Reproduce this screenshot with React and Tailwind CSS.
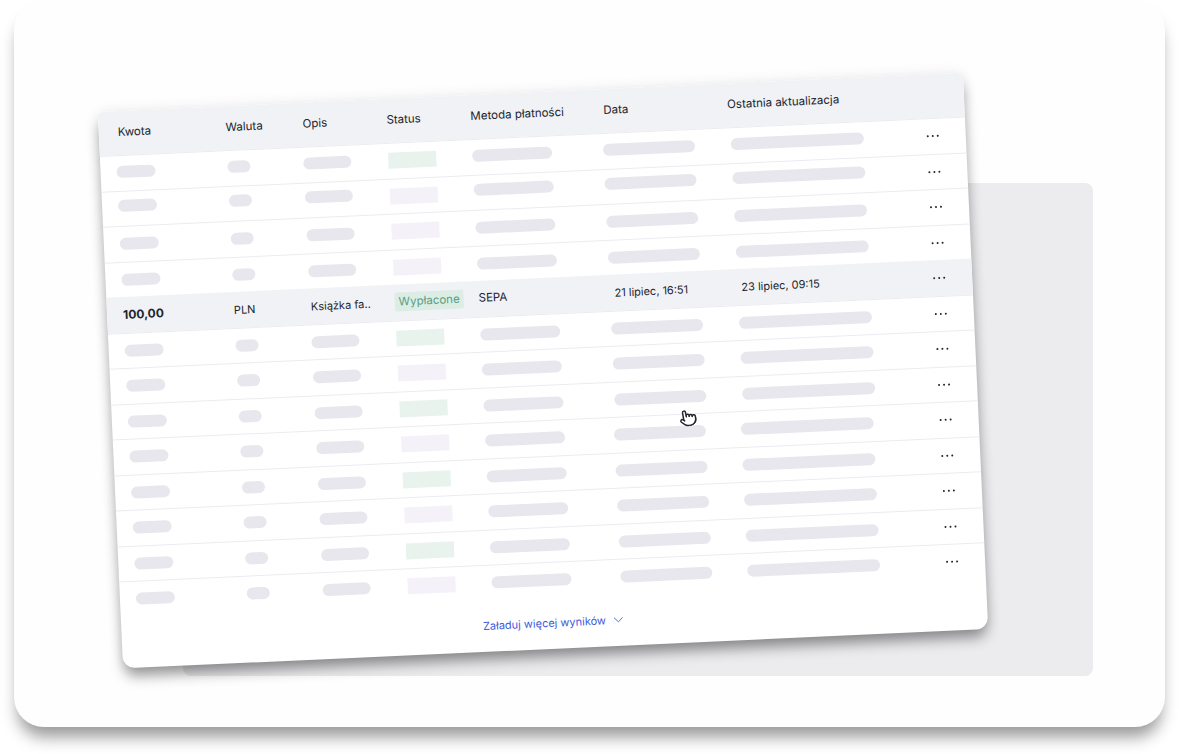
import React from "react"
import { ChevronDown, Pointer } from "lucide-react"

const cols = "grid grid-cols-[111px_77px_84px_84px_131px_128px_190px_1fr] items-center pl-4"

// kolejnosc statusow w tabeli, "row" to wiersz z danymi
const rows = ["green", "gray", "gray", "gray", "row", "green", "gray", "green", "gray", "green", "gray", "green", "gray"]

function Pill({ className }) {
  return <div className={`h-3 rounded-full bg-[#e8e7ee] ${className}`} />
}

function Dots() {
  return (
    <div className="flex gap-[3px] pl-[6px]">
      <span className="size-[2px] rounded-full bg-[#22252e]" />
      <span className="size-[2px] rounded-full bg-[#22252e]" />
      <span className="size-[2px] rounded-full bg-[#22252e]" />
    </div>
  )
}

function SkeletonRow({ status, lower, raised }) {
  return (
    <div className={`${cols} h-[35.5px] border-t border-[#ecebf0]`}>
      <Pill className={`w-[39px] ${raised}`} />
      <Pill className={`w-[23px] ${raised}`} />
      <Pill className={`ml-[-1px] w-[48px] ${raised}`} />
      <div className={`h-4 w-[48px] ${status === "green" ? "bg-[#e8f3ee]" : "bg-[#f4f2f8]"}`} />
      <Pill className={`w-[80px] ${raised}`} />
      <Pill className={`w-[92px] ${raised} ${lower ? "ml-[-2px]" : ""}`} />
      <Pill className={`w-[133px] ${raised} ${lower ? "ml-[-3px]" : ""}`} />
      <Dots />
    </div>
  )
}

function DataRow() {
  return (
    <div className={`${cols} h-[35.5px] bg-[#f1f2f5] text-[11px] text-[#22252e]`}>
      <div className="text-[12px] font-bold">100,00</div>
      <div>PLN</div>
      <div>Książka fa..</div>
      <div className="w-[69px] rounded-[2px] bg-[#dcede5] py-px text-center text-[11.5px] text-[#5c9f82]">Wypłacone</div>
      <div className="text-[11.5px]">SEPA</div>
      <div className="ml-[5px]">21 lipiec, 16:51</div>
      <div className="ml-[4px]">23 lipiec, 09:15</div>
      <Dots />
    </div>
  )
}

export default function App() {
  return (
    <div className="h-[754px] overflow-hidden bg-white px-[14px] font-['Inter',sans-serif]">
      <div className="relative h-[727px] rounded-[30px] bg-[#fefefe] pt-[183px] pb-[51px] pl-[169px] pr-[72px] shadow-[0_14px_16px_-4px_rgba(0,0,0,0.4)]">
        <div className="h-full rounded-lg bg-[#ecebee]" />

        <div className="absolute left-[96px] top-[92px] flex h-[557px] w-[866px] rotate-[-2.6deg] flex-col overflow-hidden rounded-t-md rounded-b-xl bg-white shadow-[0_10px_14px_-2px_rgba(0,0,0,0.4),0_0_14px_rgba(0,0,0,0.08)]">
          <div className={`${cols} h-[44px] shrink-0 bg-[#f1f2f5] text-[11.5px] text-[#22252e]`}>
            <div className="ml-[3px]">Kwota</div>
            <div>Waluta</div>
            <div>Opis</div>
            <div>Status</div>
            <div>Metoda płatności</div>
            <div className="ml-[2px]">Data</div>
            <div className="ml-[-2px]">Ostatnia aktualizacja</div>
          </div>

          {rows.map((status, index) =>
            status === "row" ? (
              <DataRow key={index} />
            ) : (
              <SkeletonRow
                key={index}
                status={status}
                lower={index >= 8}
                raised={index === 0 ? "mb-[2px]" : index === 1 ? "mb-[6px]" : ""}
              />
            )
          )}

          <div className="flex flex-1 items-center justify-center gap-1 text-[11px] text-[#3f5bd9]">
            <span>Załaduj więcej wyników</span>
            <ChevronDown size={16} strokeWidth={1.25} />
          </div>
        </div>

        <Pointer
          size={18}
          strokeWidth={2}
          className="absolute left-[665px] top-[409px] rotate-[-10deg] fill-white text-[#22252e]"
        />
      </div>
    </div>
  )
}
